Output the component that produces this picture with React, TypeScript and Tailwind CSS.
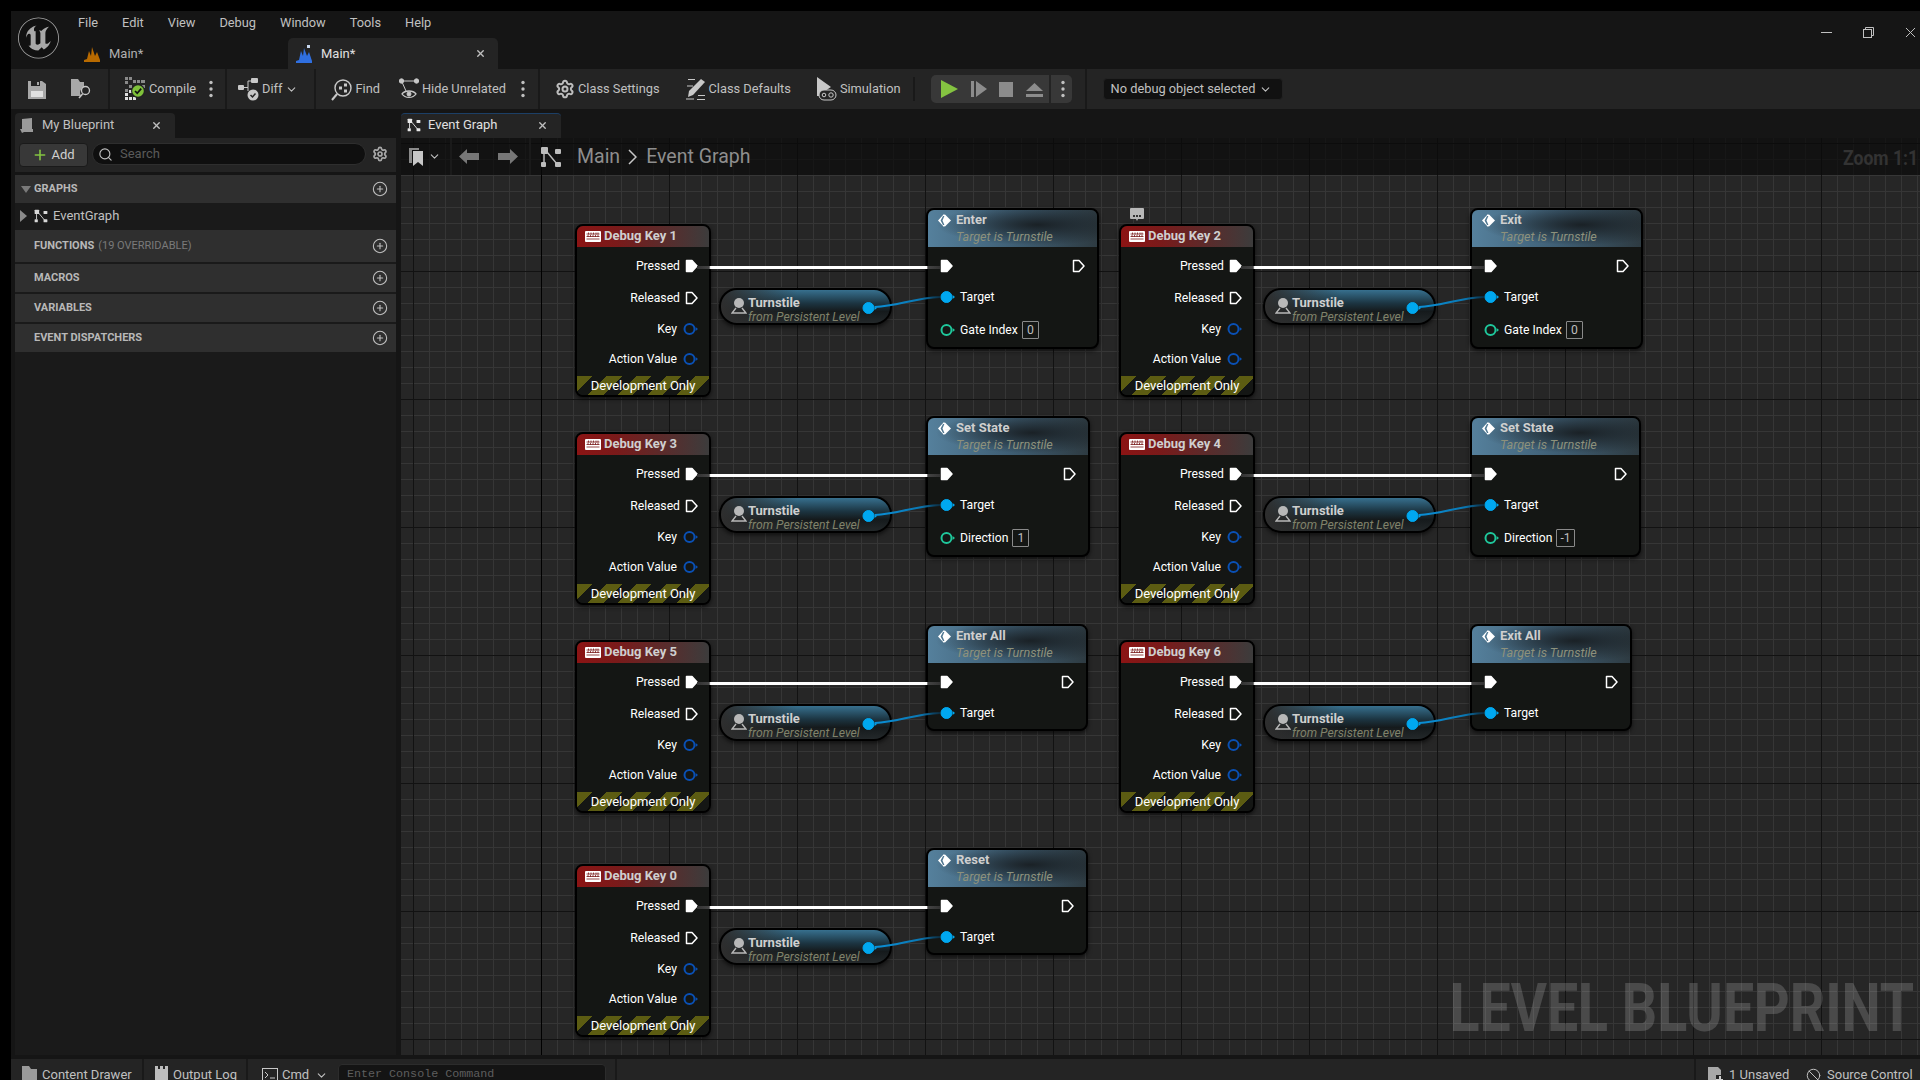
import React from "react";
import { ChevronDown, CirclePlus, Search, Settings, X, Plus, Ban } from "lucide-react";
import { SiUnrealengine } from "react-icons/si";

const MENU = ["File", "Edit", "View", "Debug", "Window", "Tools", "Help"];
const SECTIONS = [
  { label: "FUNCTIONS", note: "(19 OVERRIDABLE)", cls: "h-[32px] mb-[2px]" },
  { label: "MACROS", cls: "h-[28px] mb-[2px]" },
  { label: "VARIABLES", cls: "h-[28px] mb-[2px]" },
  { label: "EVENT DISPATCHERS", cls: "h-[28px]" },
];

interface CallInfo {
  key: string;
  title: string;
  w: number;
  param?: string;
  val?: string;
}

const ROWS: { y: number; pair: CallInfo[] }[] = [
  {
    y: 0,
    pair: [
      { key: "Debug Key 1", title: "Enter", w: 173, param: "Gate Index", val: "0" },
      { key: "Debug Key 2", title: "Exit", w: 173, param: "Gate Index", val: "0" },
    ],
  },
  {
    y: 208,
    pair: [
      { key: "Debug Key 3", title: "Set State", w: 164, param: "Direction", val: "1" },
      { key: "Debug Key 4", title: "Set State", w: 171, param: "Direction", val: "-1" },
    ],
  },
  {
    y: 416,
    pair: [
      { key: "Debug Key 5", title: "Enter All", w: 162 },
      { key: "Debug Key 6", title: "Exit All", w: 162 },
    ],
  },
  { y: 640, pair: [{ key: "Debug Key 0", title: "Reset", w: 162 }] },
];

function GraphIcon({ className = "" }: { className?: string }) {
  return (
    <svg viewBox="0 0 22 22" className={className} fill="currentColor">
      <rect x="1" y="1" width="7" height="7" rx="1" />
      <rect x="15" y="3" width="6" height="5" rx="1" />
      <rect x="1" y="16" width="5" height="5" rx="1" />
      <rect x="15" y="16" width="6" height="5" rx="1" />
      <path d="M4 8v8M7 6l10 12" stroke="currentColor" strokeWidth="1.4" fill="none" />
    </svg>
  );
}

function ExecPin({ filled }: { filled?: boolean }) {
  return (
    <svg width="13" height="14" viewBox="0 0 13 14" className="shrink-0">
      <path
        d="M1.5 1.5H7L12 7L7 12.5H1.5Z"
        fill={filled ? "#fff" : "none"}
        stroke="#fff"
        strokeWidth="1.5"
        strokeLinejoin="round"
      />
    </svg>
  );
}

function DataPin({ color, filled }: { color: string; filled?: boolean }) {
  return (
    <svg width="15" height="14" viewBox="0 0 15 14" className="shrink-0">
      <circle cx="6.5" cy="7" r={filled ? 5.5 : 5} fill={filled ? color : "none"} stroke={color} strokeWidth={filled ? 1 : 2} />
      <path d="M12.6 5 15 7l-2.4 2Z" fill={color} />
    </svg>
  );
}

function KeyboardIcon() {
  return (
    <svg width="16" height="11" viewBox="0 0 16 11" className="shrink-0">
      <rect width="16" height="11" rx="1" fill="#fff" />
      <path
        d="M1.5 3h13M1.5 5.5h13M1.5 8h13M3.5 1.5v2M6 1.5v2M8.5 1.5v2M11 1.5v2M13 1.5v2M3 4v2M5.5 4v2M8 4v2M10.5 4v2M13 4v2"
        stroke="#7a1a1a"
        strokeWidth="0.8"
      />
    </svg>
  );
}

function FunctionIcon() {
  return (
    <svg width="15" height="15" viewBox="0 0 15 15" className="shrink-0">
      <path d="M7 1 1 7.5 7 14l1.6-2H6L3.6 7.5 6 3h2.6Z" fill="#fff" />
      <path d="M8 1.5 14 7.5 8 13.5 5.5 7.5Z" fill="#fff" />
    </svg>
  );
}

function KeyNode({ title, x, y }: { title: string; x: number; y: number }) {
  return (
    <div
      className="absolute w-[136px] h-[173px] rounded-[8px] border-2 border-black bg-[#141614] shadow-[0_2px_4px_rgba(0,0,0,0.6)] overflow-hidden"
      style={{ left: x, top: y }}
    >
      <div className="h-[21px] flex items-center gap-[3px] pl-[8px] pb-[1px] bg-[linear-gradient(to_right,#8c1414,#7a1a1a_30%,#3c3c3c)] text-[13px] font-bold text-[#cfcfcf]">
        <KeyboardIcon />
        {title}
      </div>
      <div className="flex flex-col items-end pr-[11px] pt-[3px] text-[12.2px] text-white">
        <div className="h-[32px] flex items-center gap-[5px]">
          Pressed
          <ExecPin filled />
        </div>
        <div className="h-[32px] flex items-center gap-[5px]">
          Released
          <ExecPin />
        </div>
        <div className="h-[30px] flex items-center gap-[6px]">
          Key
          <DataPin color="#0a50b4" />
        </div>
        <div className="h-[30px] flex items-center gap-[6px]">
          Action Value
          <DataPin color="#0a50b4" />
        </div>
      </div>
      <div className="absolute left-0 right-0 bottom-0 h-[19px] pt-[1px] flex items-center justify-center text-[13px] text-white bg-[repeating-linear-gradient(135deg,#5c5c12_0px,#5c5c12_11px,#141614_11px,#141614_21px)]">
        Development Only
      </div>
    </div>
  );
}

function Pill({ x, y }: { x: number; y: number }) {
  return (
    <div
      className="absolute w-[173px] h-[37px] rounded-[18px] border-2 border-black shadow-[0_2px_4px_rgba(0,0,0,0.6)] bg-[linear-gradient(to_right,#2e2e2e,rgba(46,46,46,0)_45%),linear-gradient(to_bottom,#37708e_0%,#1c3542_40%,#151a1c_65%,#23282a_100%)]"
      style={{ left: x, top: y }}
    >
      <svg width="16" height="17" viewBox="0 0 16 17" className="absolute left-[10px] top-[7px]">
        <circle cx="8" cy="6" r="5" fill="#b8b8b8" />
        <path d="M5 11 1 16h14l-4-5" fill="none" stroke="#b8b8b8" strokeWidth="1.4" />
      </svg>
      <div className="absolute left-[27px] top-[6px] text-[13px] leading-[14px] font-bold text-[#cfcfcf]">Turnstile</div>
      <div className="absolute left-[27px] top-[20px] text-[12.2px] leading-[14px] italic text-[#80826a] whitespace-nowrap">
        from Persistent Level
      </div>
      <div className="absolute left-[141px] top-[11px]">
        <DataPin color="#00a8f0" filled />
      </div>
    </div>
  );
}

function CallNode({ info, x, y }: { info: CallInfo; x: number; y: number }) {
  return (
    <div
      className="absolute rounded-[8px] border-2 border-black bg-[#141614] shadow-[0_2px_4px_rgba(0,0,0,0.6)] overflow-hidden"
      style={{ left: x, top: y, width: info.w, height: info.param ? 141 : 107 }}
    >
      <div className="h-[37px] relative bg-[radial-gradient(ellipse_60%_55%_at_65%_40%,#1a2126_0%,rgba(26,33,38,0)_100%),linear-gradient(to_right,#55809c,#3f5f75_50%,#2e3b42)]">
        <div className="absolute left-[9px] top-[3px]">
          <FunctionIcon />
        </div>
        <div className="absolute left-[28px] top-[1px] text-[13px] leading-[17px] font-bold text-[#cfcfcf]">{info.title}</div>
        <div className="absolute left-[28px] top-[19px] text-[12.6px] leading-[16px] italic text-[#8d917c] whitespace-nowrap">
          Target is Turnstile
        </div>
      </div>
      <div className="flex flex-col pl-[12px] pr-[12px] pt-[3px] text-[12.2px] text-white">
        <div className="h-[32px] flex items-center justify-between">
          <ExecPin filled />
          <ExecPin />
        </div>
        <div className="h-[30px] flex items-center gap-[5px]">
          <DataPin color="#00a8f0" filled />
          Target
        </div>
        {info.param && (
          <div className="h-[36px] flex items-center gap-[5px]">
            <DataPin color="#1fc79b" />
            {info.param}
            <span className="-ml-px min-w-[17px] h-[18px] px-[3px] border border-[#8a8a8a] rounded-[1px] flex items-center justify-center text-[#bdbdbd]">
              {info.val}
            </span>
          </div>
        )}
      </div>
    </div>
  );
}

function Wires({ x, y }: { x: number; y: number }) {
  return (
    <svg className="absolute" style={{ left: x, top: y }} width="260" height="60" viewBox="0 0 260 60">
      <defs>
        <linearGradient id="execWire" x1="0" x2="1" y1="0" y2="0">
          <stop offset="0" stopColor="#333" />
          <stop offset="0.05" stopColor="#444" />
          <stop offset="0.056" stopColor="#fff" />
          <stop offset="0.945" stopColor="#fff" />
          <stop offset="0.95" stopColor="#444" />
          <stop offset="1" stopColor="#333" />
        </linearGradient>
        <linearGradient id="dataWire" x1="0" x2="1" y1="0" y2="0">
          <stop offset="0" stopColor="#0a90d8" />
          <stop offset="0.7" stopColor="#0a78b4" />
          <stop offset="1" stopColor="#0c2c40" />
        </linearGradient>
      </defs>
      <rect x="0" y="10" width="243" height="3" fill="url(#execWire)" />
      <path d="M178 51 C200 50 218 42 243 41" fill="none" stroke="url(#dataWire)" strokeWidth="2" />
    </svg>
  );
}

function TopIconSave() {
  return (
    <svg width="18" height="19" viewBox="0 0 18 19" fill="#a8a8a8">
      <path d="M0 1h14l4 3v15H0Z" />
      <rect x="3" y="1" width="9" height="5" fill="#242424" />
      <rect x="9" y="2" width="2" height="3" fill="#a8a8a8" />
      <rect x="3" y="11" width="12" height="6" fill="#e0e0e0" />
    </svg>
  );
}

function TopIconFolder() {
  return (
    <svg width="21" height="20" viewBox="0 0 21 20">
      <path d="M0 0h7l2 3h4v5a6 6 0 0 0-3 9H0Z" fill="#a8a8a8" />
      <circle cx="14.5" cy="11.5" r="4" fill="none" stroke="#c8c8c8" strokeWidth="1.3" />
      <path d="M11.5 15 8 19" stroke="#c8c8c8" strokeWidth="1.5" />
    </svg>
  );
}

function CompileIcon() {
  return (
    <svg width="21" height="24" viewBox="0 0 21 24">
      <g fill="#8a8a8a">
        <rect x="0" y="0" width="3" height="3" />
        <rect x="4" y="0" width="3" height="3" />
        <rect x="8" y="3" width="3" height="3" />
        <rect x="12" y="3" width="3" height="3" />
        <rect x="16" y="3" width="4" height="3" />
        <rect x="0" y="4" width="3" height="3" />
        <rect x="4" y="8" width="3" height="3" />
        <rect x="0" y="12" width="3" height="3" />
        <rect x="17" y="8" width="3" height="3" />
      </g>
      <g fill="#e0e0e0">
        <rect x="0" y="16" width="3" height="3" />
        <rect x="4" y="20" width="3" height="3" />
        <rect x="0" y="20" width="3" height="3" />
        <rect x="8" y="20" width="3" height="3" />
        <rect x="4" y="13" width="3" height="3" />
      </g>
      <circle cx="13" cy="14" r="7" fill="#222" />
      <circle cx="13" cy="14" r="5.8" fill="#7fc13a" />
      <path d="M10 14l2.2 2.2L16.2 11.6" fill="none" stroke="#111" strokeWidth="1.7" />
    </svg>
  );
}

function DiffIcon() {
  return (
    <svg width="21" height="23" viewBox="0 0 21 23" fill="#c8c8c8">
      <rect x="0" y="7" width="6" height="5" rx="1" />
      <rect x="13" y="0" width="7" height="5" rx="1" />
      <path d="M6 9.5h4V3h3M10 9.5V13" stroke="#c8c8c8" fill="none" />
      <circle cx="15" cy="17" r="5.5" />
      <path d="M12.5 17l2 2 3-3.6" stroke="#242424" strokeWidth="1.5" fill="none" />
    </svg>
  );
}

function FindIcon() {
  return (
    <svg width="21" height="23" viewBox="0 0 21 23" fill="none" stroke="#c8c8c8" strokeWidth="1.4">
      <circle cx="12" cy="10" r="8" />
      <path d="M6 16 1 22" strokeWidth="2" />
      <g fill="#c8c8c8" stroke="none">
        <rect x="8" y="8.5" width="3" height="3" />
        <rect x="13" y="5.5" width="3" height="3" />
        <rect x="13" y="11.5" width="3" height="3" />
      </g>
    </svg>
  );
}

function HideIcon() {
  return (
    <svg width="20" height="22" viewBox="0 0 20 22" fill="none" stroke="#c8c8c8">
      <circle cx="2.5" cy="3" r="2.2" fill="#c8c8c8" />
      <circle cx="17.5" cy="3" r="2.2" fill="#c8c8c8" />
      <path d="M2.5 3h15M3 4l4 9" />
      <path d="M3 16c3-4 11-4 14 0-3 4.5-11 4.5-14 0Z" strokeWidth="1.3" />
      <circle cx="10" cy="16" r="2" fill="#c8c8c8" />
    </svg>
  );
}

function DefaultsIcon() {
  return (
    <svg width="20" height="22" viewBox="0 0 20 22" fill="#c8c8c8">
      <path d="M2 1h7v1H2ZM11 21H19v1H11ZM12 17h7v1h-7Z" />
      <path d="M15 1l4 3L7 17l-5 2 1-6Z" />
      <path d="M1 8h6M0 21h8" stroke="#c8c8c8" fill="none" />
    </svg>
  );
}

function SimIcon() {
  return (
    <svg width="21" height="24" viewBox="0 0 21 24">
      <path d="M1 0l14 10-6 4-3 5H1Z" fill="#c8c8c8" />
      <rect x="3" y="13" width="17" height="10" rx="5" fill="#242424" stroke="#c8c8c8" />
      <circle cx="8" cy="18" r="1.8" fill="none" stroke="#c8c8c8" />
      <circle cx="15" cy="18" r="2.2" fill="none" stroke="#c8c8c8" />
    </svg>
  );
}

function Dots() {
  return (
    <svg width="4" height="18" viewBox="0 0 4 18" fill="#c0c0c0" className="shrink-0">
      <circle cx="2" cy="2.5" r="1.7" />
      <circle cx="2" cy="9" r="1.7" />
      <circle cx="2" cy="15.5" r="1.7" />
    </svg>
  );
}

function Sep() {
  return <div className="w-[2px] h-[40px] bg-[#191919] shrink-0" />;
}

function ToolButton({ icon, label, className }: { icon: React.ReactNode; label: string; className?: string }) {
  return (
    <div className={`flex items-center gap-[3px] text-[#c0c0c0] ${className ?? ""}`}>
      {icon}
      <span>{label}</span>
    </div>
  );
}

function Toolbar() {
  return (
    <div className="h-[40px] shrink-0 bg-[#242424] flex items-center text-[12.8px] whitespace-nowrap">
      <div className="ml-[17px] w-[18px]">
        <TopIconSave />
      </div>
      <div className="ml-[25px] w-[21px]">
        <TopIconFolder />
      </div>
      <div className="ml-[16px]">
        <Sep />
      </div>
      <ToolButton className="ml-[15px]" icon={<CompileIcon />} label="Compile" />
      <div className="ml-[13px]">
        <Dots />
      </div>
      <div className="ml-[12px]">
        <Sep />
      </div>
      <ToolButton className="ml-[11px]" icon={<DiffIcon />} label="Diff" />
      <ChevronDown size={13} strokeWidth={2} className="ml-[3px] text-[#c0c0c0]" />
      <div className="ml-[16px]">
        <Sep />
      </div>
      <ToolButton className="ml-[15px]" icon={<FindIcon />} label="Find" />
      <ToolButton className="ml-[19px]" icon={<HideIcon />} label="Hide Unrelated" />
      <div className="ml-[15px]">
        <Dots />
      </div>
      <div className="ml-[13px]">
        <Sep />
      </div>
      <ToolButton className="ml-[15px]" icon={<Settings size={20} strokeWidth={2.4} className="text-[#bdbdbd]" />} label="Class Settings" />
      <ToolButton className="ml-[26px]" icon={<DefaultsIcon />} label="Class Defaults" />
      <ToolButton className="ml-[25px]" icon={<SimIcon />} label="Simulation" />
      <div className="ml-[12px] w-[2px] h-[24px] bg-[#191919]" />
      <div className="ml-[16px] w-[141px] h-[28px] rounded-[5px] bg-[#383838] flex items-center">
        <svg width="103" height="18" viewBox="0 0 103 18" className="ml-[10px] shrink-0">
          <path d="M0 0 17 9 0 18Z" fill="#84c341" />
          <rect x="30" y="1" width="3" height="16" fill="#8c8c8c" />
          <path d="M35 1 46 9 35 17Z" fill="#8c8c8c" />
          <rect x="58" y="2" width="14" height="15" fill="#8c8c8c" />
          <path d="M85 9 93.5 1 102 9Z" fill="#8c8c8c" transform="translate(0 2)" />
          <rect x="85" y="14" width="17" height="3" fill="#8c8c8c" />
        </svg>
        <div className="ml-[5px] w-[2px] h-[28px] bg-[#242424]" />
        <div className="ml-[10px]">
          <Dots />
        </div>
      </div>
      <div className="ml-[13px] w-[2px] h-[40px] bg-[#191919]" />
      <div className="ml-[16px] w-[180px] h-[22px] rounded-[4px] bg-[#111111] border border-[#222] flex items-center pl-[7px] gap-[4px] text-[#c0c0c0]">
        No debug object selected
        <ChevronDown size={13} strokeWidth={2} />
      </div>
    </div>
  );
}

function SidePanel() {
  return (
    <div className="w-[381px] ml-[4px] flex flex-col flex-1">
      <div className="h-[25px] mt-[4px] flex shrink-0">
        <div className="w-[160px] h-full rounded-t-[4px] bg-[#242424] flex items-center pl-[5px] pb-[1px] text-[13px] text-[#c0c0c0] whitespace-nowrap">
          <svg width="14" height="15" viewBox="0 0 14 15" fill="#9a9a9a" className="shrink-0">
            <path d="M2 1l10-1v11H2ZM0 11h13v3H4l-2 1Z" />
          </svg>
          <span className="ml-[8px]">My Blueprint</span>
          <X size={11} strokeWidth={3} className="ml-[37px] text-[#c0c0c0] shrink-0" />
        </div>
      </div>
      <div className="h-[34px] shrink-0 bg-[#242424] flex items-start pt-[5px] pl-[4px]">
        <div className="w-[69px] h-[24px] rounded-[4px] bg-[#383838] border border-[#1a1a1a] flex items-center justify-center gap-[3px] text-[13px] text-[#d0d0d0]">
          <Plus size={16} strokeWidth={2.4} className="text-[#84c341]" />
          Add
        </div>
        <div className="ml-[4px] w-[274px] h-[22px] rounded-full bg-[#0f0f0f] border border-[#2e2e2e] flex items-center pl-[5px] gap-[7px] text-[13px] text-[#5a5a5a]">
          <Search size={15} strokeWidth={1.8} className="text-[#c0c0c0]" />
          Search
        </div>
        <Settings size={16} strokeWidth={2.6} className="ml-[6px] mt-[3px] text-[#a8a8a8]" />
      </div>
      <div className="flex-1 mt-[3px] bg-[#1a1a1a] flex flex-col">
        <div className="h-[28px] shrink-0 bg-[#2f2f2f] flex items-center justify-between pl-[6px] pr-[8px] text-[11px] font-bold text-[#b8b8b8]">
          <div className="flex items-center gap-[3px]">
            <svg width="10" height="7" viewBox="0 0 10 7" fill="#7a7a7a">
              <path d="M0 0h10L5 7Z" />
            </svg>
            GRAPHS
          </div>
          <CirclePlus size={16} strokeWidth={1.6} className="text-[#c0c0c0]" />
        </div>
        <div className="h-[27px] shrink-0 flex items-center pl-[5px] pb-[2px] text-[13px] text-[#c0c0c0]">
          <svg width="7" height="12" viewBox="0 0 7 12" fill="#8a8a8a">
            <path d="M0 0l7 6-7 6Z" />
          </svg>
          <GraphIcon className="w-[14px] h-[14px] ml-[7px] text-[#d8d8d8]" />
          <span className="ml-[5px]">EventGraph</span>
        </div>
        {SECTIONS.map((s) => (
          <div key={s.label} className={`shrink-0 bg-[#2f2f2f] flex items-center justify-between pl-[19px] pr-[8px] text-[11px] text-[#b8b8b8] ${s.cls}`}>
            <div>
              <span className="font-bold">{s.label}</span>
              {s.note && <span className="ml-[4px] text-[#7a7a7a]">{s.note}</span>}
            </div>
            <CirclePlus size={16} strokeWidth={1.6} className="text-[#c0c0c0]" />
          </div>
        ))}
      </div>
      <div className="h-[4px] shrink-0" />
    </div>
  );
}

function GraphPanel() {
  return (
    <div className="flex-1 ml-[5px] flex flex-col min-w-0">
      <div className="h-[25px] mt-[4px] shrink-0 flex">
        <div className="w-[160px] h-full rounded-t-[4px] bg-[#242424] border-t border-[#1c3f66] flex items-center pl-[6px] pb-[2px] text-[13px] text-[#e0e0e0] whitespace-nowrap">
          <GraphIcon className="w-[14px] h-[14px] text-[#e8e8e8] shrink-0" />
          <span className="ml-[7px]">Event Graph</span>
          <X size={11} strokeWidth={3} className="ml-[39px] text-[#c0c0c0] shrink-0" />
        </div>
      </div>
      <div className="flex-1 relative overflow-hidden bg-[#262626] bg-[linear-gradient(to_right,#121212_1px,transparent_1px),linear-gradient(to_bottom,#121212_1px,transparent_1px),linear-gradient(to_right,#363636_1px,transparent_1px),linear-gradient(to_bottom,#363636_1px,transparent_1px)] [background-size:128px_128px,128px_128px,16px_16px,16px_16px] [background-position:12px_5px]">
        <div className="absolute top-0 bottom-0 left-[140px] w-px bg-black" />

        {ROWS.map((row) =>
          row.pair.map((c, i) => {
            const dx = i * 544;
            return (
              <React.Fragment key={c.key}>
                <KeyNode title={c.key} x={174 + dx} y={row.y + 86} />
                <Pill x={318 + dx} y={row.y + 150} />
                <CallNode info={c} x={525 + dx} y={row.y + 70} />
                <Wires x={296 + dx} y={row.y + 118} />
              </React.Fragment>
            );
          })
        )}

        <svg width="14" height="13" viewBox="0 0 14 13" className="absolute left-[729px] top-[70px]">
          <path d="M1 0h12a1 1 0 0 1 1 1v9a1 1 0 0 1-1 1H8l-1 2-1-2H1a1 1 0 0 1-1-1V1a1 1 0 0 1 1-1Z" fill="#b8b8b8" />
          <g fill="#333">
            <rect x="3" y="7" width="2" height="2" />
            <rect x="6" y="7" width="2" height="2" />
            <rect x="9" y="7" width="2" height="2" />
          </g>
        </svg>

        <div className="absolute top-0 left-0 right-0 h-[37px] bg-[#0a0a0a]/70 flex items-center text-[#9a9a9a]">
          <svg width="14" height="18" viewBox="0 0 14 18" className="ml-[8px]">
            <path d="M0 0h10v2H3v13H0Z" fill="#8a8a8a" />
            <path d="M4 3h10v15l-5-4-5 4Z" fill="#c8c8c8" />
          </svg>
          <ChevronDown size={13} strokeWidth={2} className="ml-[5px] text-[#c0c0c0]" />
          <div className="ml-[9px] w-[2px] h-[37px] bg-[#1a1a1a]" />
          <svg width="20" height="15" viewBox="0 0 20 15" fill="#777" className="ml-[7px]">
            <path d="M8 0v4h12v7H8v4L0 7.5Z" />
          </svg>
          <svg width="20" height="15" viewBox="0 0 20 15" fill="#777" className="ml-[19px]">
            <path d="M12 0v4H0v7h12v4l8-7.5Z" />
          </svg>
          <div className="ml-[11px] w-[2px] h-[37px] bg-[#1a1a1a]" />
          <GraphIcon className="ml-[9px] w-[22px] h-[22px] text-[#bdbdbd]" />
          <span className="ml-[15px] text-[19.5px] text-[#8e8e8e]">Main</span>
          <svg width="9" height="16" viewBox="0 0 9 16" fill="none" stroke="#c8c8c8" strokeWidth="1.5" className="ml-[8px]">
            <path d="M1 1l7 7-7 7" />
          </svg>
          <span className="ml-[9px] text-[19.5px] text-[#8e8e8e]">Event Graph</span>
          <span className="absolute left-[1442px] top-[5px] text-[20px] font-bold text-[#333] whitespace-nowrap origin-left scale-x-[0.88]">
            Zoom 1:1
          </span>
        </div>

        <div className="absolute right-[6px] bottom-[13px] text-[66px] leading-[66px] font-bold text-white/[0.17] whitespace-nowrap origin-right scale-x-[0.84]">
          LEVEL BLUEPRINT
        </div>
      </div>
      <div className="h-[4px] shrink-0" />
    </div>
  );
}

function StatusBar() {
  return (
    <div className="h-[21px] shrink-0 bg-[#242424] flex items-start pt-[7px] text-[13px] leading-[18px] text-[#c0c0c0] overflow-hidden whitespace-nowrap relative">
      <div className="ml-[11px] flex items-center gap-[4px] w-[120px]">
        <svg width="16" height="18" viewBox="0 0 16 18" fill="#9a9a9a">
          <path d="M0 0h7l2 3h6v15H0Z" />
        </svg>
        Content Drawer
      </div>
      <div className="absolute left-[131px] top-0 w-[2px] h-[21px] bg-[#191919]" />
      <div className="ml-[13px] flex items-center gap-[5px] w-[100px]">
        <svg width="13" height="18" viewBox="0 0 13 18" fill="#bdbdbd">
          <path d="M0 0h3v3h2V0h3v3h2V0h3v18H0Z" />
        </svg>
        Output Log
      </div>
      <div className="absolute left-[235px] top-0 w-[2px] h-[21px] bg-[#191919]" />
      <div className="ml-[7px] flex items-center gap-[4px]">
        <svg width="16" height="14" viewBox="0 0 16 14" fill="none" stroke="#c8c8c8">
          <rect x="0.5" y="0.5" width="15" height="13" />
          <path d="M3 4l3 3-3 3M8 10h5" />
        </svg>
        Cmd
        <ChevronDown size={13} className="ml-[2px]" />
      </div>
      <div className="absolute left-[327px] top-[5px] w-[268px] h-[24px] rounded-[4px] bg-[#141414] border border-[#2c2c2c] pl-[8px] font-['Liberation_Mono',monospace] text-[11.7px] text-[#5e5e5e]">
        Enter Console Command
      </div>
      <div className="absolute left-[604px] top-0 w-[2px] h-[21px] bg-[#191919]" />
      <div className="absolute left-[1683px] top-0 w-[2px] h-[21px] bg-[#191919]" />
      <div className="absolute left-[1697px] top-[7px] flex items-center gap-[6px]">
        <svg width="15" height="16" viewBox="0 0 15 16" fill="#a8a8a8">
          <path d="M0 0h10l3 3v5H8v8H0Z" />
          <path d="M11 9v3H8v2h3v2h2v-2h2v-2h-2V9Z" fill="#d0d0d0" />
        </svg>
        1 Unsaved
      </div>
      <div className="absolute left-[1795px] top-[7px] flex items-center gap-[6px]">
        <Ban size={15} strokeWidth={1.6} />
        Source Control
      </div>
    </div>
  );
}

export default function App() {
  return (
    <div className="w-[1920px] h-[1080px] bg-black overflow-hidden pl-[11px] pt-[11px] font-['Roboto',sans-serif]">
      <div className="h-[1069px] w-[1909px] bg-[#151515] flex flex-col">
        <div className="h-[58px] shrink-0 relative">
          <div className="absolute left-[7px] top-[6px] w-[41px] h-[41px] rounded-full flex items-center justify-center bg-[#111]">
            <SiUnrealengine size={42} className="text-[#a8a8a8]" />
          </div>
          <div className="absolute left-[67px] top-[4px] flex text-[12.8px] leading-[16px] text-[#c0c0c0]">
            {MENU.map((m, i) => (
              <span key={m} className={i === 0 ? "" : "ml-[24px]"}>
                {m}
              </span>
            ))}
          </div>
          <div className="absolute left-[73px] top-[27px] h-[31px] flex items-center text-[13px] text-[#b0b0b0]">
            <svg width="16" height="16" viewBox="0 0 16 16" fill="#b86a00">
              <path d="M0 14 3 13 5 5 7 10 8 1 11 10 13 6 16 14Z" />
              <rect y="14" width="16" height="2" />
            </svg>
            <span className="ml-[9px]">Main*</span>
          </div>
          <div className="absolute left-[277px] top-[27px] w-[210px] h-[31px] rounded-t-[5px] bg-[#242424] flex items-center text-[13px] text-[#e0e0e0]">
            <svg width="16" height="18" viewBox="0 0 16 18" className="ml-[8px]" fill="#2f6fe0">
              <path d="M0 16 3 15 5 6 7 11 8 3 11 11 13 7 16 16Z" />
              <rect y="16" width="16" height="2" />
              <path d="M11 0h3v3h-3Z" fill="#c8d8f0" />
            </svg>
            <span className="ml-[9px]">Main*</span>
            <X size={11} strokeWidth={3} className="ml-[120px] text-[#c0c0c0]" />
          </div>
          <div className="absolute top-[13px] left-[1810px] flex items-center text-[#c0c0c0]">
            <div className="w-[11px] h-px bg-[#c0c0c0]" />
            <svg width="11" height="11" viewBox="0 0 11 11" fill="none" stroke="#c0c0c0" className="ml-[31px]">
              <rect x="0.5" y="2.5" width="8" height="8" />
              <path d="M2.5 2.5v-2h8v8h-2" />
            </svg>
            <X size={17} strokeWidth={1.4} className="ml-[28px]" />
          </div>
        </div>
        <Toolbar />
        <div className="flex-1 flex min-h-0">
          <div className="flex flex-col">
            <SidePanel />
          </div>
          <GraphPanel />
        </div>
        <StatusBar />
      </div>
    </div>
  );
}
